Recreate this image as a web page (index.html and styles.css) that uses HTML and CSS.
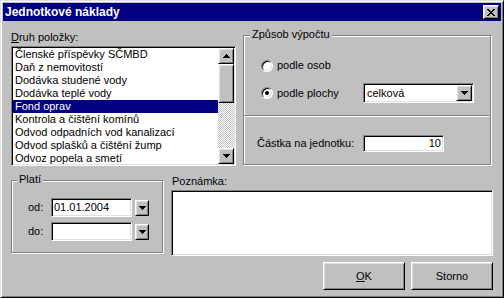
FILE: index.html
```html
<!DOCTYPE html>
<html lang="cs">
<head>
  <meta charset="UTF-8">
  <title>Jednotkové náklady</title>
  <link rel="stylesheet" href="styles.css">
</head>
<body>
  <div class="window">
    <div class="titlebar">
      <span class="title">Jednotkové náklady</span>
      <div class="raised close-btn">
        <svg width="8" height="7" viewBox="0 0 8 7" shape-rendering="crispEdges"><path d="M0 0h2v1h1v1h2V1h1V0h2v1H7v1H6v1H5v1h1v1h1v1h1v1H6V6H5V5H3v1H2v1H0V6h1V5h1V4h1V3H2V2H1V1H0z" fill="#000"/></svg>
      </div>
    </div>

    <div class="content">
      <div class="top-row">
        <div class="list-col">
          <div class="label"><u>D</u>ruh položky:</div>
          <div class="sunken listbox">
            <ul class="list-items">
              <li>Členské příspěvky SČMBD</li>
              <li>Daň z nemovitostí</li>
              <li>Dodávka studené vody</li>
              <li>Dodávka teplé vody</li>
              <li class="selected">Fond oprav</li>
              <li>Kontrola a čištění komínů</li>
              <li>Odvod odpadních vod kanalizací</li>
              <li>Odvod splašků a čištění žump</li>
              <li>Odvoz popela a smetí</li>
            </ul>
            <div class="scrollbar">
              <div class="raised sb-btn">
                <svg width="7" height="4" viewBox="0 0 7 4" shape-rendering="crispEdges"><path d="M3 0h1v1h1v1h1v1h1v1H0V3h1V2h1V1h1z" fill="#000"/></svg>
              </div>
              <div class="raised sb-thumb"></div>
              <div class="sb-track"></div>
              <div class="raised sb-btn">
                <svg width="7" height="4" viewBox="0 0 7 4" shape-rendering="crispEdges"><path d="M0 0h7v1H6v1H5v1H4v1H3V3H2V2H1V1H0z" fill="#000"/></svg>
              </div>
            </div>
          </div>
        </div>

        <div class="group method-group">
          <div class="group-title">Způsob výpočtu</div>
          <div class="radio-row">
            <span class="radio"></span>
            <span class="radio-text">podle osob</span>
          </div>
          <div class="radio-row combo-row">
            <div class="radio-label">
              <span class="radio"><span class="dot"></span></span>
              <span class="radio-text">podle plochy</span>
            </div>
            <div class="sunken combo">
              <span class="combo-text">celková</span>
              <div class="raised drop-btn">
                <svg width="7" height="4" viewBox="0 0 7 4" shape-rendering="crispEdges"><path d="M0 0h7v1H6v1H5v1H4v1H3V3H2V2H1V1H0z" fill="#000"/></svg>
              </div>
            </div>
          </div>
          <div class="separator"></div>
          <div class="amount-row">
            <span class="amount-label">Částka na jednotku:</span>
            <div class="sunken edit amount-edit">10</div>
          </div>
        </div>
      </div>

      <div class="bottom-row">
        <div class="group valid-group">
          <div class="group-title">Platí</div>
          <div class="date-row">
            <span class="date-label">od:</span>
            <div class="sunken edit date-edit">01.01.2004</div>
            <div class="raised date-btn">
              <svg width="7" height="4" viewBox="0 0 7 4" shape-rendering="crispEdges"><path d="M0 0h7v1H6v1H5v1H4v1H3V3H2V2H1V1H0z" fill="#000"/></svg>
            </div>
          </div>
          <div class="date-row">
            <span class="date-label">do:</span>
            <div class="sunken edit date-edit"></div>
            <div class="raised date-btn">
              <svg width="7" height="4" viewBox="0 0 7 4" shape-rendering="crispEdges"><path d="M0 0h7v1H6v1H5v1H4v1H3V3H2V2H1V1H0z" fill="#000"/></svg>
            </div>
          </div>
        </div>

        <div class="note-col">
          <div class="label">Poznámka:</div>
          <div class="sunken memo"></div>
          <div class="buttons">
            <div class="raised push-btn"><u>O</u>K</div>
            <div class="raised push-btn">Storno</div>
          </div>
        </div>
      </div>
    </div>
  </div>
</body>
</html>
```

FILE: styles.css
```css
* {
  margin: 0;
  padding: 0;
  box-sizing: border-box;
}

body {
  font-family: "Liberation Sans", Arial, sans-serif;
  font-size: 11px;
  line-height: 13px;
  color: #000;
  background: #c0c0c0;
}

u {
  text-decoration: underline;
  text-underline-offset: 1px;
}

/* 3d frames */
.raised {
  background: #c0c0c0;
  border: 1px solid;
  border-color: #fff #000 #000 #fff;
  box-shadow: inset 1px 1px #dfdfdf, inset -1px -1px #808080;
}

.sunken {
  background: #fff;
  border: 1px solid;
  border-color: #808080 #fff #fff #808080;
  box-shadow: inset 1px 1px #000, inset -1px -1px #dfdfdf;
  padding: 1px;
}

.window {
  width: 504px;
  height: 298px;
  background: #c0c0c0;
  border: 1px solid;
  border-color: #dfdfdf #000 #000 #dfdfdf;
  box-shadow: inset 1px 1px #fff, inset -1px -1px #808080;
  padding: 2px;
  display: flex;
  flex-direction: column;
}

.titlebar {
  height: 18px;
  flex-shrink: 0;
  background: #000080;
  display: flex;
  align-items: center;
  justify-content: space-between;
  padding: 0 2px;
}

.title {
  color: #fff;
  font-weight: bold;
  font-size: 12px;
}

.close-btn {
  width: 16px;
  height: 14px;
  display: flex;
  align-items: center;
  justify-content: center;
}

.close-btn svg {
  display: block;
}

.content {
  flex: 1;
  display: flex;
  flex-direction: column;
  padding: 10px 8px 0;
}

.label {
  height: 13px;
  margin-bottom: 2px;
  white-space: nowrap;
}

.top-row {
  display: flex;
  gap: 7px;
}

.list-col {
  width: 225px;
}

.listbox {
  height: 120px;
  display: flex;
}

.list-items {
  flex: 1;
  list-style: none;
  overflow: hidden;
}

.list-items li {
  height: 13px;
  padding-left: 2px;
  white-space: nowrap;
}

.list-items li.selected {
  background: #000080;
  color: #fff;
}

.scrollbar {
  width: 16px;
  display: flex;
  flex-direction: column;
}

.sb-btn {
  height: 16px;
  display: flex;
  align-items: center;
  justify-content: center;
}

.sb-btn svg, .drop-btn svg, .date-btn svg {
  display: block;
}

.sb-thumb {
  height: 39px;
}

.sb-track {
  flex: 1;
  background: repeating-conic-gradient(#c0c0c0 0 25%, #fff 0 50%) 0 0 / 2px 2px;
}

/* group boxes */
.group {
  border: 1px solid #808080;
  box-shadow: inset 1px 1px #fff, 1px 1px #fff;
  display: flex;
  flex-direction: column;
}

.group-title {
  align-self: flex-start;
  height: 13px;
  margin: -8px 0 0 6px;
  padding: 0 2px;
  background: #c0c0c0;
}

.method-group {
  width: 248px;
  height: 130px;
  margin-top: 4px;
}

.radio-row {
  display: flex;
  align-items: center;
  height: 13px;
  margin: 18px 0 0 17px;
}

.radio-row.combo-row {
  height: 20px;
  margin-top: 11px;
}

.radio-label {
  width: 102px;
  display: flex;
  align-items: center;
}

.radio {
  width: 12px;
  height: 12px;
  flex-shrink: 0;
  border-radius: 50%;
  background: #fff;
  border: 1px solid;
  border-color: #808080 #fff #fff #808080;
  box-shadow: inset 1px 1px #000, inset -1px -1px #dfdfdf;
  display: flex;
  align-items: center;
  justify-content: center;
}

.dot {
  width: 4px;
  height: 4px;
  border-radius: 50%;
  background: #000;
}

.radio-text {
  margin-left: 4px;
  white-space: nowrap;
}

.combo {
  width: 111px;
  height: 20px;
  display: flex;
  align-items: center;
}

.combo-text {
  flex: 1;
  padding-left: 2px;
}

.drop-btn {
  width: 16px;
  height: 16px;
  display: flex;
  align-items: center;
  justify-content: center;
}

.separator {
  height: 2px;
  border-top: 1px solid #808080;
  border-bottom: 1px solid #fff;
  margin: 12px 1px 0 0;
}

.amount-row {
  display: flex;
  align-items: center;
  height: 17px;
  margin: 18px 0 0 13px;
}

.amount-label {
  width: 106px;
  white-space: nowrap;
}

.edit {
  display: flex;
  align-items: center;
}

.amount-edit {
  width: 81px;
  height: 17px;
  justify-content: flex-end;
  padding-right: 2px;
}

/* bottom part */
.bottom-row {
  display: flex;
  gap: 8px;
  margin-top: 9px;
}

.valid-group {
  width: 152px;
  height: 73px;
  margin-top: 5px;
}

.valid-group .group-title {
  margin-left: 5px;
}

.date-row {
  display: flex;
  align-items: center;
  height: 19px;
  margin: 12px 0 0 16px;
}

.date-row + .date-row {
  margin-top: 5px;
}

.date-label {
  width: 23px;
}

.date-edit {
  width: 81px;
  height: 19px;
  padding-left: 2px;
}

.date-btn {
  width: 14px;
  height: 16px;
  margin-left: 3px;
  display: flex;
  align-items: center;
  justify-content: center;
}

.note-col {
  width: 322px;
  display: flex;
  flex-direction: column;
}

.note-col .label {
  padding-left: 1px;
}

.memo {
  height: 66px;
}

.buttons {
  display: flex;
  justify-content: flex-end;
  gap: 6px;
  margin-top: 6px;
}

.push-btn {
  width: 82px;
  height: 28px;
  display: flex;
  align-items: center;
  justify-content: center;
}
```
